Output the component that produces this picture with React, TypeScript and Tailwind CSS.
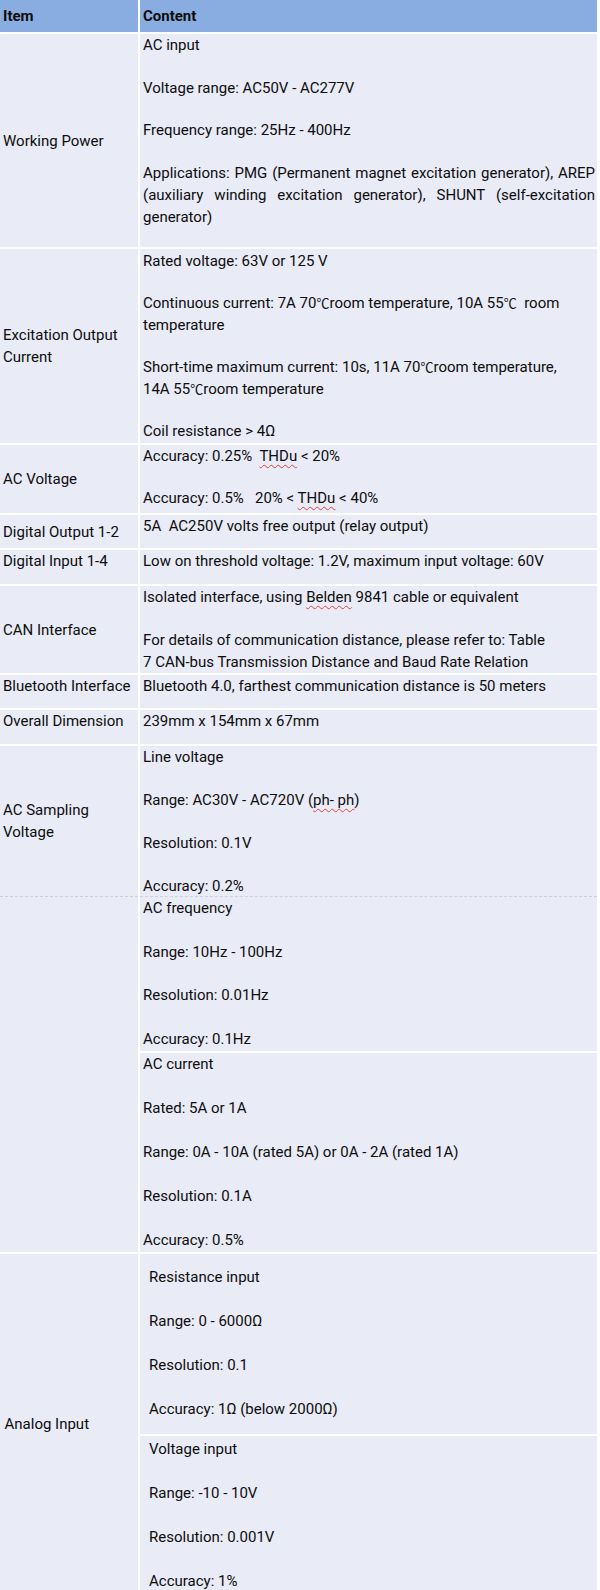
import React from 'react'

// squiggly spell-check underline seen under some words
const Sq: React.FC<{ children: React.ReactNode }> = ({ children }) => (
  <span className="underline decoration-wavy decoration-[#e0453c] decoration-1 underline-offset-[3px]">{children}</span>
)

// the degree-celsius sign in the source comes from a CJK font
const C = () => <span className="font-['Noto_Sans_CJK_SC',sans-serif] text-[13px]">℃</span>

const Paras: React.FC<{ items: React.ReactNode[]; className?: string }> = ({ items, className = '' }) => (
  <div className={`flex flex-col ${className}`}>
    {items.map((p, i) => (
      <div key={i} className="whitespace-pre-wrap">{p}</div>
    ))}
  </div>
)

const Row: React.FC<{
  label?: React.ReactNode
  h: string
  top?: boolean
  labelClass?: string
  children: React.ReactNode
}> = ({ label, h, top, labelClass = 'pl-[3px]', children }) => (
  <div className={`flex gap-[2px] ${h}`}>
    <div className={`w-[138px] shrink-0 bg-[#e9ebf6] flex ${top ? 'items-start' : 'items-center'} ${labelClass}`}>
      <div className="whitespace-nowrap">{label}</div>
    </div>
    <div className="flex-1 bg-[#e9ebf6] pl-[3px] pr-[2px]">{children}</div>
  </div>
)

export default function App() {
  return (
    <div className="w-[600px] h-[1590px] overflow-hidden bg-white font-[Roboto,sans-serif] text-[15px] leading-[22px] text-[#0d0d0d]">
      <div className="w-[597px] flex flex-col gap-[2px]">
        {/* header */}
        <div className="flex gap-[2px] h-[32px] font-bold">
          <div className="w-[138px] shrink-0 bg-[#89ade0] flex items-center pl-[3px]">Item</div>
          <div className="flex-1 bg-[#89ade0] flex items-center pl-[3px]">Content</div>
        </div>

        <Row label="Working Power" h="h-[213px]">
          <Paras
            className="gap-[20.5px]"
            items={[
              'AC input',
              'Voltage range: AC50V - AC277V',
              'Frequency range: 25Hz - 400Hz',
              <div>
                <div className="text-justify [text-align-last:justify]">Applications: PMG (Permanent magnet excitation generator), AREP</div>
                <div className="text-justify [text-align-last:justify]">(auxiliary winding excitation generator), SHUNT (self-excitation</div>
                <div>generator)</div>
              </div>,
            ]}
          />
        </Row>

        <Row label={<>Excitation Output<br />Current</>} h="h-[194px]">
          <Paras
            className="gap-[20px] pt-[1px]"
            items={[
              'Rated voltage: 63V or 125 V',
              <>Continuous current: 7A 70<C />room temperature, 10A 55<C />  room<br />temperature</>,
              <>Short-time maximum current: 10s, 11A 70<C />room temperature,<br />14A 55<C />room temperature</>,
              'Coil resistance > 4Ω',
            ]}
          />
        </Row>

        <Row label="AC Voltage" h="h-[68px]">
          <Paras
            className="gap-[20px]"
            items={[
              <>Accuracy: 0.25%  <Sq>THDu</Sq> {'<'} 20%</>,
              <>Accuracy: 0.5%   20% {'<'} <Sq>THDu</Sq> {'<'} 40%</>,
            ]}
          />
        </Row>

        <Row label="Digital Output 1-2" h="h-[33px]">
          <Paras items={['5A  AC250V volts free output (relay output)']} />
        </Row>

        <Row label="Digital Input 1-4" h="h-[34px]" top>
          <Paras items={['Low on threshold voltage: 1.2V, maximum input voltage: 60V']} />
        </Row>

        <Row label="CAN Interface" h="h-[87px]">
          <Paras
            className="gap-[21px]"
            items={[
              <>Isolated interface, using <Sq>Belden</Sq> 9841 cable or equivalent</>,
              <>For details of communication distance, please refer to: Table<br />7 CAN-bus Transmission Distance and Baud Rate Relation</>,
            ]}
          />
        </Row>

        <Row label="Bluetooth Interface" h="h-[33px]" top>
          <Paras items={['Bluetooth 4.0, farthest communication distance is 50 meters']} />
        </Row>

        <Row label="Overall Dimension" h="h-[34px]" top>
          <Paras items={['239mm x 154mm x 67mm']} />
        </Row>

        {/* AC sampling block: dashed rule below first row, left cell spans the rest */}
        <div className="flex flex-col">
          <div className="flex gap-[2px] h-[151px]">
            <div className="w-[138px] shrink-0 bg-[#e9ebf6] flex items-center pl-[3px] border-b border-dashed border-[#cdd0dc]">
              <div>AC Sampling<br />Voltage</div>
            </div>
            <div className="flex-1 bg-[#e9ebf6] pl-[3px] pr-[2px] border-b border-dashed border-[#cdd0dc]">
              <Paras
                className="gap-[21px]"
                items={['Line voltage', <>Range: AC30V - AC720V (<Sq>ph- ph</Sq>)</>, 'Resolution: 0.1V', 'Accuracy: 0.2%']}
              />
            </div>
          </div>
          <div className="flex gap-[2px]">
            <div className="w-[138px] shrink-0 bg-[#e9ebf6]" />
            <div className="flex-1 flex flex-col gap-[2px]">
              <div className="h-[154px] bg-[#e9ebf6] pl-[3px] pr-[2px]">
                <Paras
                  className="gap-[21.5px]"
                  items={['AC frequency', 'Range: 10Hz - 100Hz', 'Resolution: 0.01Hz', 'Accuracy: 0.1Hz']}
                />
              </div>
              <div className="h-[199px] bg-[#e9ebf6] pl-[3px] pr-[2px]">
                <Paras
                  className="gap-[22px]"
                  items={[
                    'AC current',
                    'Rated: 5A or 1A',
                    'Range: 0A - 10A (rated 5A) or 0A - 2A (rated 1A)',
                    'Resolution: 0.1A',
                    'Accuracy: 0.5%',
                  ]}
                />
              </div>
            </div>
          </div>
        </div>

        {/* Analog input */}
        <div className="flex gap-[2px] h-[340px]">
          <div className="w-[138px] shrink-0 bg-[#e9ebf6] flex items-center pl-[4.5px]">
            <div>Analog Input</div>
          </div>
          <div className="flex-1 flex flex-col gap-[2px]">
            <div className="h-[180px] bg-[#e9ebf6] pl-[9px]">
              <Paras
                className="gap-[22px] pt-[12px]"
                items={['Resistance input', 'Range: 0 - 6000Ω', 'Resolution: 0.1', 'Accuracy: 1Ω (below 2000Ω)']}
              />
            </div>
            <div className="flex-1 bg-[#e9ebf6] pl-[9px]">
              <Paras
                className="gap-[22px] pt-[2px]"
                items={['Voltage input', 'Range: -10 - 10V', 'Resolution: 0.001V', 'Accuracy: 1%']}
              />
            </div>
          </div>
        </div>
      </div>
    </div>
  )
}
